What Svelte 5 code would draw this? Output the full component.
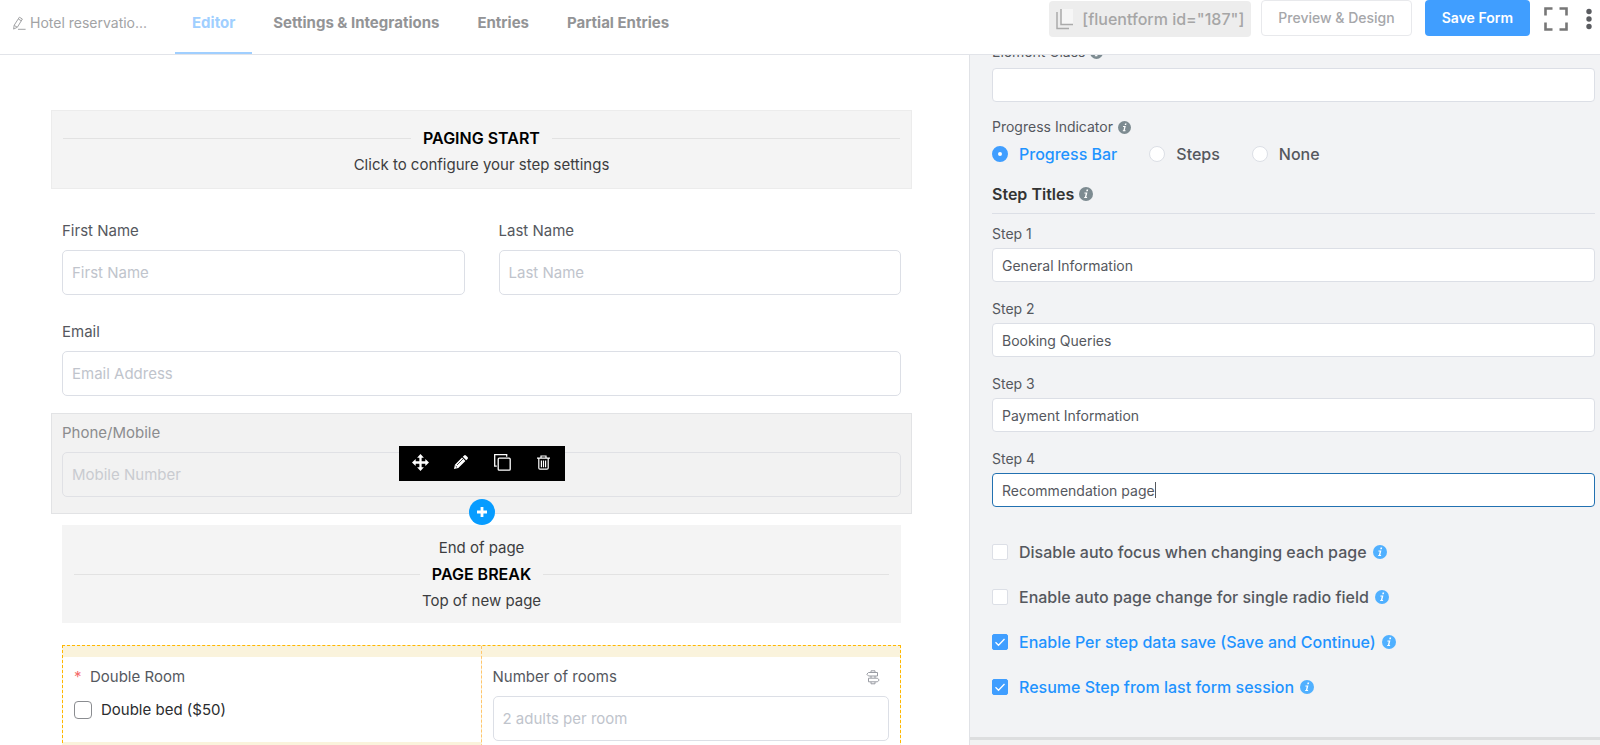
<script>
  let steps = $state([
    { id: 1, title: 'General Information' },
    { id: 2, title: 'Booking Queries' },
    { id: 3, title: 'Payment Information' },
    { id: 4, title: 'Recommendation page' },
  ]);
  let indicator = $state('Progress Bar');
  const indicators = ['Progress Bar', 'Steps', 'None'];
  let options = $state([
    { label: 'Disable auto focus when changing each page', on: false },
    { label: 'Enable auto page change for single radio field', on: false },
    { label: 'Enable Per step data save (Save and Continue)', on: true },
    { label: 'Resume Step from last form session', on: true },
  ]);
  const tabs = ['Editor', 'Settings & Integrations', 'Entries', 'Partial Entries'];

  // The caret of the step being edited sits after the last letter of its title.
  const ruler = document.createElement('canvas').getContext('2d');
  ruler.font = '14px Inter, "Liberation Sans", sans-serif';
  function caretLeft(title) {
    return Math.round(ruler.measureText(title).width) + 10;
  }
</script>

{#snippet info(kind)}
  <svg class="info {kind}" viewBox="0 0 14 14" aria-hidden="true">
    <circle cx="7" cy="7" r="7" />
    <path d="M7.6 2.6h1.6l-.4 1.7H7.2zM5.5 5.4h2.9L7.3 10h.9l-.2 1H5.1l.2-1h.6l.8-3.6h-1.4z" fill="#fff" />
  </svg>
{/snippet}

<div class="page">
  <header>
    <button class="form-name">
      <svg width="14" height="14" viewBox="0 0 14 14" fill="none" stroke="currentColor" aria-hidden="true">
        <path d="M7.4 1.2l3 1.8-5 8.2-3.8 1.9.6-3.9zM6.3 3l3 1.8M2.2 9.4l3 1.8M6 13.3h7.6" />
      </svg>
      <span>Hotel reservatio...</span>
    </button>
    <nav>
      {#each tabs as tab, i}
        <a href="#{i}" class:active={i === 0}>{tab}</a>
      {/each}
    </nav>
    <div class="actions">
      <button class="shortcode">
        <svg width="20" height="22" viewBox="0 0 20 22" aria-hidden="true">
          <path d="M5 1h12v16H5z" fill="#f6f6f6" />
          <path d="M5 1v15.500h12M1 4v16.500h12" fill="none" stroke="#aaa" stroke-width="1.500" />
        </svg>
        [fluentform id="187"]
      </button>
      <button class="preview">Preview &amp; Design</button>
      <button class="save">Save Form</button>
      <button class="icon" aria-label="Full screen">
        <svg width="24" height="24" viewBox="0 0 24 24" fill="none" stroke="#777" stroke-width="2.600" aria-hidden="true">
          <path d="M1.500 8.500V1.500H8.500M15.500 1.500h7V8.500M22.500 15.500v7H15.500M8.500 22.500H1.500V15.500" />
        </svg>
      </button>
      <button class="icon" aria-label="More">
        <svg width="6" height="22" viewBox="0 0 6 22" fill="#5a5c60" aria-hidden="true">
          <circle cx="3" cy="3.500" r="2.700" /><circle cx="3" cy="11" r="2.700" /><circle cx="3" cy="18.500" r="2.700" />
        </svg>
      </button>
    </div>
  </header>

  <main>
    <section class="canvas">
      <div class="break start">
        <div class="rule"><strong>PAGING START</strong></div>
        <p>Click to configure your step settings</p>
      </div>

      <div class="row names">
        <div class="field">
          <label for="first">First Name</label>
          <input id="first" type="text" placeholder="First Name" />
        </div>
        <div class="field">
          <label for="last">Last Name</label>
          <input id="last" type="text" placeholder="Last Name" />
        </div>
      </div>

      <div class="row">
        <div class="field">
          <label for="email">Email</label>
          <input id="email" type="email" placeholder="Email Address" />
        </div>
      </div>

      <div class="selected">
        <div class="field">
          <label for="phone">Phone/Mobile</label>
          <input id="phone" type="tel" placeholder="Mobile Number" />
        </div>
        <div class="toolbar">
          <button aria-label="Move">
            <svg width="17" height="17" viewBox="0 0 18 18" fill="#fff" aria-hidden="true">
              <path d="M9 0l3.600 3.900h-2.400v3.900h3.900V5.400L18 9l-3.900 3.600v-2.400h-3.900v3.900h2.400L9 18l-3.600-3.900h2.400v-3.900H3.900v2.400L0 9l3.900-3.600v2.400h3.900V3.900H5.400z" />
            </svg>
          </button>
          <button aria-label="Edit">
            <svg width="14" height="14" viewBox="0 0 14 14" aria-hidden="true">
              <path d="M0 14l.9-4.300L8 2.600 11.400 6l-7.100 7.100zM8.800 1.800L10.100.5q.9-.9 1.800 0l1.600 1.600q.9.9 0 1.800l-1.300 1.300z" fill="#fff" />
              <path d="M3 10l6-6" stroke="#000" stroke-width=".7" />
              <path d="M1.600 11l1.400 1.400" stroke="#000" stroke-width=".8" />
            </svg>
          </button>
          <button aria-label="Duplicate">
            <svg width="17" height="17" viewBox="0 0 17 17" fill="none" stroke="#fff" stroke-width="1.300" aria-hidden="true">
              <rect x="4.200" y="4.200" width="12" height="12" rx="1" />
              <path d="M2.800 12.200H.7V.7h12v2" />
            </svg>
          </button>
          <button aria-label="Delete">
            <svg width="13" height="15" viewBox="0 0 13 15" fill="none" stroke="#fff" stroke-width="1.200" aria-hidden="true">
              <path d="M0 3.200h13M4 3V1h5v2M1.800 3.500v9.500q0 1.200 1.200 1.200h7q1.200 0 1.200-1.200V3.500M4.400 5.400v6.800M6.500 5.400v6.800M8.600 5.400v6.800" />
            </svg>
          </button>
        </div>
        <button class="add" aria-label="Add field">
          <svg width="12" height="12" viewBox="0 0 12 12" aria-hidden="true"><path d="M6 1v10M1 6h10" stroke="#fff" stroke-width="2.800" /></svg>
        </button>
      </div>

      <div class="break middle">
        <p>End of page</p>
        <div class="rule"><strong>PAGE BREAK</strong></div>
        <p>Top of new page</p>
      </div>

      <div class="container">
        <div class="cell">
          <div class="body">
            <div class="caption"><span class="star">*</span>Double Room</div>
            <label class="tick"><input type="checkbox" />Double bed ($50)</label>
          </div>
        </div>
        <div class="cell">
          <div class="body field">
            <div class="caption split">
              <label for="rooms">Number of rooms</label>
              <svg width="14" height="15" viewBox="0 0 14 15" fill="none" stroke="#999ca3" aria-hidden="true">
                <path d="M5 2V.8h4V2M2.500 2.500h9v3.500h-9L.8 4.200zM5 6v2M9 6v2M2.500 8.200h9l1.700 1.800-1.700 1.800h-9zM5 12v1.800h4V12" />
              </svg>
            </div>
            <input id="rooms" type="text" placeholder="2 adults per room" />
          </div>
        </div>
      </div>
    </section>

    <aside>
      <div class="settings">
        <label class="head" for="cls">Element Class {@render info('grey')}</label>
        <input id="cls" type="text" />

        <fieldset>
          <legend class="head">Progress Indicator {@render info('grey')}</legend>
          <div class="radios">
            {#each indicators as name}
              <label class:on={indicator === name}>
                <input type="radio" name="indicator" value={name} bind:group={indicator} />{name}
              </label>
            {/each}
          </div>
        </fieldset>

        <h2>Step Titles {@render info('grey')}</h2>

        {#each steps as step (step.id)}
          <div class="step">
            <label for="step{step.id}">Step {step.id}</label>
            <div class="box">
              <input id="step{step.id}" class:current={step.id === 4} type="text" bind:value={step.title} />
              {#if step.id === 4}
                <span class="caret" style="left: {caretLeft(step.title)}px"></span>
              {/if}
            </div>
          </div>
        {/each}

        <div class="options">
          {#each options as option}
            <label class:on={option.on}>
              <input type="checkbox" bind:checked={option.on} />{option.label}{@render info('blue')}
            </label>
          {/each}
        </div>
      </div>
    </aside>
  </main>
</div>

<style>
  :global(body) {
    background: #fff;
    overflow: hidden;
  }
  .page {
    height: 100vh;
    display: flex;
    flex-direction: column;
    font: 15px/20px Inter, "Liberation Sans", sans-serif;
    color: #55585e;
  }
  .page :is(button, input) {
    font: inherit;
    color: inherit;
    box-sizing: border-box;
    margin: 0;
  }
  button {
    border: 0;
    padding: 0;
    background: none;
    display: flex;
    align-items: center;
    justify-content: center;
  }
  p, h2 { margin: 0; }
  svg { flex: none; }

  header {
    display: flex;
    align-items: flex-start;
    height: 54px;
    flex: none;
    border-bottom: 1px solid #e2e4e9;
  }
  .page .form-name {
    gap: 4px;
    height: 46px;
    padding-left: 12px;
    width: 175px;
    justify-content: flex-start;
    color: #a2a3a5;
    font-size: 14px;
  }
  nav {
    display: flex;
    gap: 4px;
    flex: 1;
  }
  nav a {
    padding: 13px 17px 19px;
    border-bottom: 2px solid transparent;
    font-weight: 700;
    color: #939496;
    text-decoration: none;
    white-space: nowrap;
  }
  nav a.active {
    color: #a0cfff;
    border-color: #a0cfff;
  }
  .actions {
    display: flex;
    align-items: flex-start;
    padding-right: 8px;
  }
  .actions button {
    height: 36px;
    border-radius: 4px;
    white-space: nowrap;
    font-weight: 500;
  }
  .page .shortcode {
    background: #ededed;
    color: #a6a6a6;
    font-size: 16px;
    gap: 6px;
    padding: 0 7px;
    margin: 1px 10px 0 0;
  }
  .page .preview {
    border: 1px solid #e8e9ec;
    color: #a6a7aa;
    font-size: 14px;
    padding: 0 16px;
    margin-right: 13px;
  }
  .page .save {
    background: #409eff;
    color: #fff;
    font-size: 14px;
    font-weight: 600;
    padding: 0 17px;
    margin-right: 14px;
  }
  .page .icon { margin: 1px 18px 0 0; }
  .page .icon:last-child { margin-right: 0; }

  main {
    flex: 1;
    min-height: 0;
    display: grid;
    grid-template-columns: minmax(0, 969fr) minmax(0, 631fr);
  }
  .canvas {
    padding: 55px 57px 0 51px;
    overflow: hidden;
  }
  .break {
    background: #f4f4f4;
    text-align: center;
    color: #3c3d40;
  }
  .start {
    border: 1px solid #ececec;
    padding: 17px 11px 13px;
  }
  .middle {
    margin: 11px 11px 22px;
    padding: 13px 12px 12px;
  }
  .start p { margin-top: 7px; }
  .middle p { margin-bottom: 6px; }
  .middle .rule + p { margin: 7px 0 0; }
  .rule {
    display: flex;
    align-items: center;
    gap: 12px;
  }
  .rule::before,
  .rule::after {
    content: "";
    flex: 1;
    border-top: 1px solid #e2e2e2;
  }
  .rule strong {
    color: #000;
    font-size: 16px;
    font-weight: 600;
  }
  .row {
    display: flex;
    gap: 34px;
    padding: 0 11px;
    margin-bottom: 27px;
  }
  .names { margin-top: 32px; }
  .row .field { flex: 1; }
  .field {
    display: flex;
    flex-direction: column;
    gap: 9px;
  }
  .field input {
    width: 100%;
    height: 45px;
    border: 1px solid #dcdfe6;
    border-radius: 5px;
    padding: 0 9px;
    background: #fff;
  }
  input::placeholder {
    color: #c0c4cc;
    opacity: 1;
  }
  .selected {
    position: relative;
    margin-top: -10px;
    border: 1px solid #e2e3e5;
    background: #f2f2f2;
    padding: 9px 10px 16px;
    color: #8b8c8e;
  }
  .selected input {
    background: transparent;
    border-color: #e0e1e5;
  }
  .selected input::placeholder { color: #c9cbd0; }
  .toolbar {
    position: absolute;
    top: 32px;
    left: 50%;
    transform: translateX(-50%);
    display: flex;
    background: #000;
    height: 35px;
    padding: 0 1px;
  }
  .toolbar button {
    width: 41px;
    padding-bottom: 3px;
  }
  .add {
    position: absolute;
    bottom: -12px;
    left: 50%;
    transform: translateX(-50%);
    width: 26px;
    height: 26px;
    border-radius: 50%;
    background: #079cff;
  }
  .container {
    margin: 0 11px;
    display: grid;
    grid-template-columns: calc(50% - 1px) 1fr;
    border: 1px dashed #ffb800;
    background: #faf3dc;
  }
  .cell { padding: 11px 0; }
  .cell + .cell { border-left: 1px dashed #ffc66d; }
  .cell .body {
    background: #fff;
    padding: 10px 11px;
  }
  .cell:first-child .body { padding-bottom: 22px; }
  .caption { display: flex; }
  .split {
    justify-content: space-between;
    align-items: center;
    padding-right: 9px;
  }
  .star {
    color: #f56c6c;
    width: 16px;
  }
  .tick {
    display: flex;
    align-items: center;
    gap: 9px;
    margin-top: 13px;
    color: #2b2c2e;
  }
  .tick input {
    appearance: none;
    width: 18px;
    height: 18px;
    border: 1px solid #8a8c90;
    border-radius: 4px;
    background: #fff;
  }

  aside {
    background: #f2f3f5;
    border-left: 1px solid #e0e2e6;
    overflow: hidden;
    box-shadow: inset 0 -5px #f2f2f2, inset 0 -8px #dddedf;
  }
  .settings {
    padding: 0 5px 0 22px;
    margin-top: -13px;
  }
  .settings input[type="text"] {
    display: block;
    width: 100%;
    height: 34px;
    border: 1px solid #dcdfe6;
    border-radius: 4px;
    padding: 0 9px;
    background: #fff;
    font-size: 14px;
    outline: 0;
  }
  .settings input.current {
    border-color: #2271b1;
    caret-color: transparent;
  }
  .box { position: relative; }
  .caret {
    position: absolute;
    top: 9px;
    width: 1px;
    height: 16px;
    background: #55585e;
  }
  .info {
    width: 13px;
    height: 13px;
    margin-left: 5px;
  }
  .grey { fill: #7d8b91; }
  .blue { fill: #50b0ff; }
  .head {
    display: flex;
    align-items: center;
    font-size: 14px;
  }
  label.head { margin-bottom: 6px; }
  fieldset {
    border: 0;
    margin: 15px 0 0;
    padding: 0;
  }
  legend { padding: 0; }
  .radios {
    display: flex;
    gap: 32px;
    margin-top: 7px;
  }
  .radios label,
  .options label {
    display: flex;
    align-items: center;
    font-size: 16px;
    font-weight: 500;
  }
  .on { color: #1f93ff; }
  .settings input:is([type="radio"], [type="checkbox"]) {
    appearance: none;
    width: 16px;
    height: 16px;
    margin-right: 11px;
    border: 1px solid #dcdfe6;
    background: #fff;
    border-radius: 2px;
  }
  .settings input[type="radio"] { border-radius: 50%; }
  .settings input[type="radio"]:checked { border: 6px solid #409eff; }
  .settings input[type="checkbox"]:checked {
    border-color: #409eff;
    background: #409eff url("data:image/svg+xml,%3Csvg xmlns='http://www.w3.org/2000/svg' viewBox='0 0 14 14' fill='none' stroke='white' stroke-width='1.3'%3E%3Cpath d='M2.500 7.300l3 3 6-6.300'/%3E%3C/svg%3E");
  }
  h2 {
    display: flex;
    align-items: center;
    font-size: 16px;
    font-weight: 600;
    line-height: 20px;
    color: #333;
    margin: 20px 0 10px;
    padding-bottom: 9px;
    border-bottom: 1px solid #dcdfe6;
  }
  h2 .info {
    width: 14px;
    height: 14px;
  }
  .step {
    font-size: 14px;
    margin-bottom: 17px;
  }
  .step label {
    display: block;
    margin-bottom: 4px;
  }
  .options {
    display: flex;
    flex-direction: column;
    gap: 25px;
    margin-top: 35px;
  }
  .options .info {
    width: 14px;
    height: 14px;
    margin-left: 6px;
  }
</style>
